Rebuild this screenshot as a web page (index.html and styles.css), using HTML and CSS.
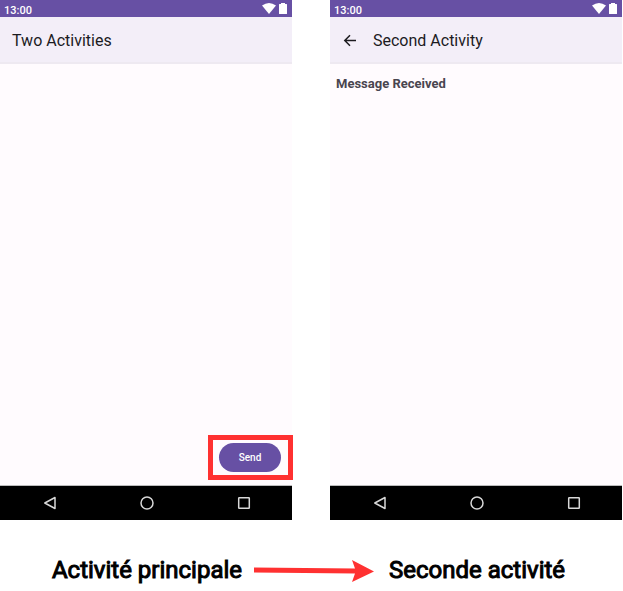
FILE: index.html
```html
<!DOCTYPE html>
<html lang="fr">
<head>
<meta charset="utf-8">
<meta name="viewport" content="width=device-width, initial-scale=1">
<title>Two Activities</title>
<link rel="stylesheet" href="styles.css">
</head>
<body>
<main class="phones">
  <section class="phone">
    <div class="status">
      <span>13:00</span>
      <svg class="status-icons" width="25" height="13" viewBox="0 0 25 13" aria-hidden="true"><path d="M0 3.5Q7 -1.5 14 3.5L7 12Z"/><path d="M17 2.5Q17 2 17.5 2H19V1h4v1h1.500Q25 2 25 2.500V11.500Q25 12 24.500 12h-7Q17 12 17 11.500Z"/></svg>
    </div>
    <header class="app-bar"><h1>Two Activities</h1></header>
    <div class="content content-main">
      <div class="highlight"><button class="send" type="button">Send</button></div>
    </div>
    <nav class="nav">
      <button type="button" aria-label="Back"><svg width="16" height="16" viewBox="0 0 16 16"><path d="M13 2.500v11L2.800 8Z"/></svg></button>
      <button type="button" aria-label="Home"><svg width="16" height="16" viewBox="0 0 16 16"><circle cx="8" cy="8" r="6"/></svg></button>
      <button type="button" aria-label="Recent apps"><svg width="16" height="16" viewBox="0 0 16 16"><rect x="2.700" y="2.700" width="10.600" height="10.600" rx=".5"/></svg></button>
    </nav>
  </section>
  <section class="phone">
    <div class="status">
      <span>13:00</span>
      <svg class="status-icons" width="25" height="13" viewBox="0 0 25 13" aria-hidden="true"><path d="M0 3.500Q7 -1.500 14 3.500L7 12Z"/><path d="M17 2.500Q17 2 17.500 2H19V1h4v1h1.500Q25 2 25 2.500V11.500Q25 12 24.500 12h-7Q17 12 17 11.500Z"/></svg>
    </div>
    <header class="app-bar">
      <button class="up" type="button" aria-label="Navigate up"><svg width="16" height="16" viewBox="0 0 16 16"><path d="M14 7.500H3M8 2.300L2.800 7.500L8 12.700"/></svg></button>
      <h1>Second Activity</h1>
    </header>
    <div class="content"><h2>Message Received</h2></div>
    <nav class="nav">
      <button type="button" aria-label="Back"><svg width="16" height="16" viewBox="0 0 16 16"><path d="M13 2.500v11L2.800 8Z"/></svg></button>
      <button type="button" aria-label="Home"><svg width="16" height="16" viewBox="0 0 16 16"><circle cx="8" cy="8" r="6"/></svg></button>
      <button type="button" aria-label="Recent apps"><svg width="16" height="16" viewBox="0 0 16 16"><rect x="2.700" y="2.700" width="10.600" height="10.600" rx=".5"/></svg></button>
    </nav>
  </section>
</main>
<footer class="captions">
  <span>Activité principale</span>
  <svg width="123" height="24" viewBox="0 0 123 24" aria-hidden="true"><path d="M0 9.500L101 10.500L98 2L120 13.500L98 24L101 15.500L0 14.500Z"/></svg>
  <span>Seconde activité</span>
</footer>
</body>
</html>
```
FILE: styles.css
```css
* {
  box-sizing: border-box;
}

body {
  margin: 0;
  background: #fff;
  color: #1c1b1f;
  font-family: Roboto, sans-serif;
}

h1,
h2 {
  margin: 0;
}

button {
  padding: 0;
  border: 0;
  background: none;
  color: inherit;
  font: inherit;
}

svg {
  display: block;
}

.phones {
  display: grid;
  grid-template-columns: 1fr 1fr;
  gap: 38px;
  padding-right: 1px;
}

.phone {
  display: flex;
  flex-direction: column;
  min-height: 520px;
  background: #fffbfe;
}

.status {
  display: flex;
  align-items: flex-start;
  justify-content: space-between;
  height: 17px;
  padding: 2px 5px 0 4px;
  background: #6750a4;
  color: #fff;
  font-size: 11px;
  font-weight: 500;
  line-height: 18px;
}

.status-icons {
  fill: #fff;
}

.app-bar {
  display: flex;
  align-items: center;
  height: 47px;
  padding: 2px 12px 0;
  border-bottom: 2px solid #eee9f1;
  background: #f3eef8;
}

.app-bar h1 {
  font-size: 16px;
  font-weight: 400;
  line-height: 20px;
}

.up {
  width: 16px;
  margin-right: 15px;
}

.up svg {
  fill: none;
  stroke: #1c1b1f;
  stroke-width: 1.5;
}

.content {
  flex: 1;
  padding: 12px 6px;
}

.content h2 {
  color: #49454f;
  font-size: 13px;
  font-weight: 700;
  line-height: 16px;
}

.content-main {
  display: flex;
  align-items: flex-end;
  justify-content: flex-end;
  padding: 0 0 5px;
}

.highlight {
  margin-right: -1px;
  padding: 3px 7px 3px 6px;
  border: 5px solid #ff3131;
}

.send {
  display: block;
  width: 62px;
  height: 29px;
  border-radius: 15px;
  background: #6750a4;
  color: #fff;
  font-size: 10px;
  font-weight: 500;
}

.nav {
  display: grid;
  grid-template-columns: repeat(3, 1fr);
  height: 35px;
  padding: 0 0 0 2px;
  border-top: 1px solid #bcbcbc;
  background: #000;
}

.nav button {
  display: grid;
  place-items: center;
}

.nav svg {
  fill: none;
  stroke: #d8d8d8;
  stroke-width: 1.5;
  stroke-linejoin: round;
}

.captions {
  display: flex;
  align-items: center;
  justify-content: center;
  gap: 12px;
  padding: 34px 6px 0 0;
  color: #000;
  font-size: 24px;
  line-height: 32px;
  -webkit-text-stroke: 1px #000;
}

.captions svg {
  fill: #ff3131;
  stroke: none;
}
```
